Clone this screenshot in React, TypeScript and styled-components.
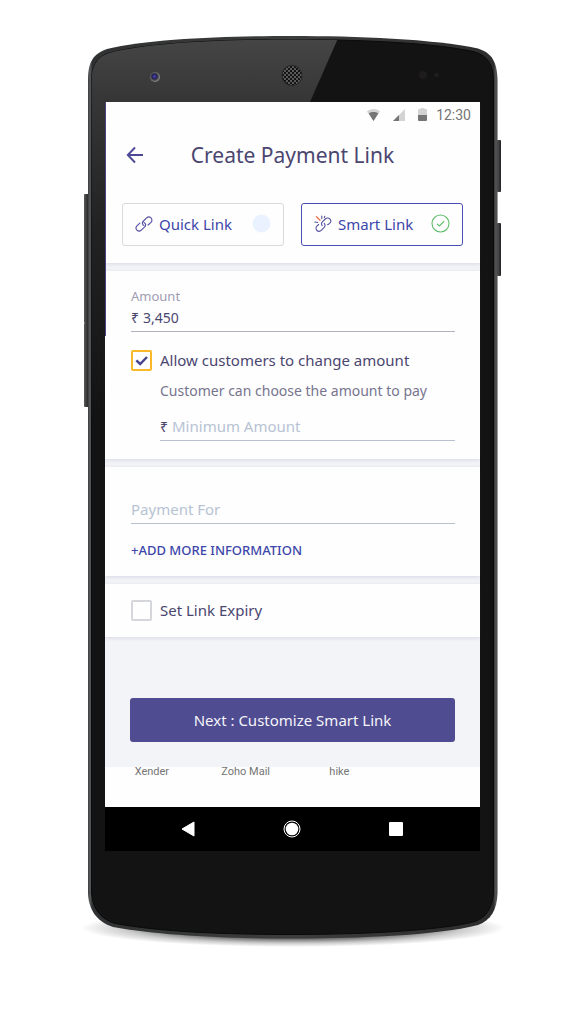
import React, { useState } from 'react';
import styled, { createGlobalStyle } from 'styled-components';

const GlobalStyle = createGlobalStyle`
  * { box-sizing: border-box; }
  body {
    margin: 0;
    background: #fff;
    font-family: 'Noto Sans', 'Open Sans', sans-serif;
  }
  button, input { font-family: inherit; }
`;

const Page = styled.div`
  display: flex;
  justify-content: center;
  padding: 30px 0 70px;
`;

const Phone = styled.div`
  position: relative;
  width: 100%;
  max-width: 417px;
  padding: 72px 21px 103px;
`;

const PhoneBody = styled.svg`
  position: absolute;
  inset: 0;
  width: 100%;
  height: 100%;
  overflow: visible;
`;

const Screen = styled.main`
  position: relative;
  display: flex;
  flex-direction: column;
  background: #f3f4f8;
  color: #4a4670;

  &::before {
    content: '';
    position: absolute;
    z-index: 1;
    top: 0;
    left: 0;
    width: 1px;
    height: 234px;
    background: #4a4580;
  }
`;

const Section = styled.section<{ $top?: number; $bottom?: number }>`
  display: flex;
  flex-direction: column;
  align-items: stretch;
  padding: ${(p) => p.$top ?? 16}px 25px ${(p) => p.$bottom ?? 16}px 26px;
  margin-bottom: 8px;
  background: #fefefe;
  box-shadow: 0 1px 4px rgba(60, 60, 110, 0.15);
`;

const Top = styled.header`
  padding-bottom: 17px;
  margin-bottom: 8px;
  background: #fefefe;
  box-shadow: 0 1px 4px rgba(60, 60, 110, 0.15);
`;

const StatusBar = styled.div`
  display: flex;
  align-items: center;
  justify-content: flex-end;
  height: 25px;
  padding-right: 9px;
  color: #757575;
  font: 14px/24px Roboto, sans-serif;

  svg { margin-right: 13px; }
  time { margin-left: -4px; }
`;

const TitleBar = styled.div`
  display: grid;
  grid-template-columns: 20px 1fr 20px;
  align-items: center;
  height: 56px;
  padding: 0 20px;
`;

const IconButton = styled.button`
  display: flex;
  align-items: center;
  justify-content: center;
  padding: 0;
  border: 0;
  background: none;
  cursor: pointer;
`;

const Title = styled.h1`
  margin: 0;
  font-size: 21px;
  line-height: 30px;
  font-weight: 400;
  text-align: center;
  white-space: nowrap;
`;

const Tabs = styled.div`
  display: grid;
  grid-template-columns: 1fr 1fr;
  gap: 17px;
  padding: 20px 17px 0;
`;

const Tab = styled.button<{ $active: boolean }>`
  display: flex;
  align-items: center;
  height: 43px;
  padding: 0 12px 2px;
  border: 1px solid ${(p) => (p.$active ? '#4750b2' : '#d9d9de')};
  border-radius: 3px;
  background: #fefefe;
  color: #3c46aa;
  font-size: 15px;
  line-height: 20px;
  cursor: pointer;
`;

const TabText = styled.span`
  flex: 1;
  margin-left: 6px;
  text-align: left;
  white-space: nowrap;
`;

const Label = styled.label`
  color: #9e9cb2;
  font-size: 13px;
  line-height: 18px;
`;

const Field = styled.div<{ $tone?: string }>`
  display: flex;
  align-items: center;
  gap: 4px;
  height: 27px;
  border-bottom: 1px solid ${(p) => p.$tone ?? '#b6c0d0'};
  font-size: 14px;
  line-height: 20px;
`;

const Input = styled.input`
  flex: 1;
  min-width: 0;
  padding: 0;
  border: 0;
  outline: 0;
  background: none;
  color: inherit;
  font-size: 14px;
  line-height: 20px;

  &::placeholder { color: #b7c3d3; opacity: 1; font-size: 15px; }
`;

const CheckRow = styled.label`
  display: flex;
  align-items: center;
  gap: 8px;
  font-size: 15px;
  line-height: 21px;
  white-space: nowrap;
  cursor: pointer;
`;

const CheckBox = styled.span`
  position: relative;
  display: flex;

  svg {
    position: absolute;
    inset: 0;
    pointer-events: none;
  }
`;

const CheckInput = styled.input`
  appearance: none;
  width: 21px;
  height: 21px;
  margin: 0;
  border: 2px solid #d5d5dc;
  border-radius: 2px;
  background: #fefefe;

  &:checked { border-color: #fbb829; }
`;

const AmountOptions = styled.div`
  padding-top: 18px;
`;

const Nested = styled.div`
  display: flex;
  flex-direction: column;
  gap: 13px;
  padding: 10px 0 0 29px;
`;

const Hint = styled.p`
  margin: 0;
  color: #77748f;
  font-size: 14px;
  line-height: 20px;
  white-space: nowrap;
`;

const AddLink = styled.a`
  align-self: flex-start;
  margin-top: 16px;
  color: #3c46aa;
  font-size: 13px;
  line-height: 20px;
  font-weight: 500;
  text-decoration: none;
`;

const Actions = styled.div`
  display: flex;
  padding: 53px 25px 25px;
`;

const NextButton = styled.button`
  flex: 1;
  height: 44px;
  border: 0;
  border-radius: 3px;
  background: #504c91;
  color: #f4f4fa;
  font-size: 15px;
  line-height: 20px;
  cursor: pointer;
`;

const ShareRow = styled.ul`
  display: grid;
  grid-template-columns: repeat(4, 1fr);
  height: 40px;
  margin: 0;
  padding: 0;
  background: #fefefe;
  color: #757575;
  font: 11px/10px Roboto, sans-serif;
  list-style: none;
  text-align: center;
`;

const NavBar = styled.nav`
  display: grid;
  grid-template-columns: repeat(3, 104px);
  justify-content: center;
  height: 44px;
  padding-right: 2px;
  background: #000;
`;

const RIM =
  'M88 200 V80 C88 62 93 54 107 49 C150 38.500 230 36 292.500 36 C355 36 435 39 478 48.500 C492 53 497 62 497.500 80 V893 C497 910 491 920 478 925 C440 935 360 938.500 292.500 938.500 C225 938.500 160 935.500 113 927 C95 921 88.500 908 88 893 Z';
const FACE =
  'M91.500 200 V82 C91.500 65 97 57 109 53 C152 42 230 39.500 292.500 39.500 C355 39.500 434 42.500 475 52 C488 56 493.500 65 493.500 82 V891 C493 907 487 917 475 921.500 C438 931 360 934.500 292.500 934.500 C225 934.500 162 932 115 923.500 C98 918 92 906 91.500 891 Z';

function PhoneFrame() {
  return (
    <PhoneBody viewBox="84 30 417 924" preserveAspectRatio="none" aria-hidden="true">
      <defs>
        <linearGradient id="rim" x1="0" y1="0" x2="1" y2="0">
          <stop offset="0" stopColor="#3a3b3c" />
          <stop offset="0.005" stopColor="#5c5d5e" />
          <stop offset="0.010" stopColor="#303132" />
          <stop offset="0.500" stopColor="#3c3d3d" />
          <stop offset="0.991" stopColor="#2c2c2d" />
          <stop offset="0.996" stopColor="#5a5a5c" />
          <stop offset="1" stopColor="#3d3d3f" />
        </linearGradient>
        <linearGradient id="glare" x1="0" y1="0" x2="0" y2="1">
          <stop offset="0" stopColor="#464646" />
          <stop offset="0.170" stopColor="#363636" />
          <stop offset="0.500" stopColor="#222" />
          <stop offset="1" stopColor="#131313" />
        </linearGradient>
        <linearGradient id="key" x1="0" y1="0" x2="1" y2="0">
          <stop offset="0" stopColor="#58595a" />
          <stop offset="1" stopColor="#1f1f20" />
        </linearGradient>
        <radialGradient id="lens" cx="0.450" cy="0.450" r="0.550">
          <stop offset="0" stopColor="#4b45c0" />
          <stop offset="0.450" stopColor="#23214d" />
          <stop offset="0.700" stopColor="#555" />
          <stop offset="1" stopColor="#8a8a8a" />
        </radialGradient>
        <radialGradient id="shade">
          <stop offset="0" stopColor="#000" stopOpacity="0.900" />
          <stop offset="0.550" stopColor="#000" stopOpacity="0.600" />
          <stop offset="0.800" stopColor="#000" stopOpacity="0.200" />
          <stop offset="1" stopColor="#000" stopOpacity="0" />
        </radialGradient>
        <pattern id="mesh" width="4" height="4" patternUnits="userSpaceOnUse">
          <circle cx="1" cy="1" r="1.100" fill="#0a0a0a" />
          <circle cx="3" cy="3" r="1.100" fill="#0a0a0a" />
        </pattern>
        <clipPath id="face"><path d={FACE} /></clipPath>
      </defs>
      <ellipse cx="293" cy="928" rx="212" ry="19" fill="url(#shade)" />
      <rect x="84" y="194" width="5" height="129" rx="1" fill="url(#key)" />
      <rect x="84" y="323" width="5" height="84" rx="1" fill="url(#key)" />
      <rect x="497" y="140" width="4" height="52" rx="1" fill="url(#key)" />
      <rect x="497" y="223" width="4" height="53" rx="1" fill="url(#key)" />
      <path d={RIM} fill="url(#rim)" />
      <path d={FACE} fill="#131313" stroke="#0b0b0b" />
      <path d="M84 36 H339 L310 102 L170 420 H84 Z" fill="url(#glare)" clipPath="url(#face)" />
      <circle cx="155" cy="77" r="5" fill="url(#lens)" />
      <circle cx="292" cy="75.500" r="10" fill="#5a5a5a" />
      <circle cx="292" cy="75.500" r="10" fill="url(#mesh)" stroke="#242424" />
      <circle cx="423" cy="75" r="4" fill="#1e1c1c" />
      <circle cx="436.500" cy="75" r="2.500" fill="#1e1c1c" />
    </PhoneBody>
  );
}

function StatusIcons() {
  return (
    <>
      <svg width="13" height="12" viewBox="0 0 13 12" aria-hidden="true">
        <path d="M0 2.500 C4 -0.700 9 -0.700 13 2.500 L6.500 12 Z" fill="#d3d3d3" />
        <path d="M1.700 4.500 C4.500 2.600 8.500 2.600 11.300 4.500 L6.500 12 Z" fill="#757575" />
      </svg>
      <svg width="12" height="12" viewBox="0 0 12 12" aria-hidden="true">
        <path d="M12 0 V12 H0 Z" fill="#d3d3d3" />
        <path d="M6 6 V12 H0 Z" fill="#757575" />
      </svg>
      <svg width="9" height="13" viewBox="0 0 9 13" aria-hidden="true">
        <path d="M2.500 0 H6.500 V1 H8 Q9 1 9 2 V7 H0 V2 Q0 1 1 1 H2.500 Z" fill="#d3d3d3" />
        <path d="M0 7 H9 V12 Q9 13 8 13 H1 Q0 13 0 12 Z" fill="#757575" />
      </svg>
    </>
  );
}

function LinkIcon() {
  return (
    <svg width="18" height="16" viewBox="0 0 17.300 15.500" aria-hidden="true">
      <g fill="none" stroke="#5551a0" strokeWidth="1.100" strokeLinecap="round">
        <path d="M8.600 9.300 C7 8.500 6.600 6.400 7.900 5.100 L11.200 1.900 C12.500 0.700 14.300 0.800 15.400 1.900 C16.600 3.100 16.600 4.900 15.400 6.100 L12.600 8.700" />
        <path d="M8.600 6.200 C10.500 7 10.700 9.200 9.400 10.500 L6 13.700 C4.700 14.900 3 14.800 1.800 13.700 C0.700 12.500 0.700 10.700 1.800 9.500 L4.600 6.900" />
      </g>
    </svg>
  );
}

function BrokenLinkIcon() {
  return (
    <svg width="18" height="18" viewBox="0 0 18 18" aria-hidden="true">
      <g fill="none" stroke="#5551a0" strokeWidth="1.100" strokeLinecap="round">
        <path d="M8.200 10.600 C7.200 9.300 7.400 7.900 8.400 6.900 L11.300 4 C12.700 2.600 14.600 2.700 15.800 3.900 C17 5.100 17 7 15.800 8.200 C15 9 14.200 9.600 13.400 9.700" />
        <path d="M10.300 8.500 C11.300 9.500 11.300 11.300 10.200 12.400 L7.300 15.400 C6 16.700 4.100 16.700 2.900 15.500 C1.700 14.300 1.700 12.400 2.900 11.200 L4.600 9.500" />
        <path d="M7.800 1 V3.600 M0.800 7 L3.800 7.500 M10.800 1.200 L10.300 2.600" />
      </g>
      <path d="M2.500 1.700 L6 5.200" stroke="#f0754e" strokeWidth="1.400" strokeLinecap="round" />
    </svg>
  );
}

function SelectionMark({ active }: { active: boolean }) {
  return (
    <svg width="19" height="19" viewBox="0 0 19 19" aria-hidden="true">
      {active ? (
        <g fill="none" stroke="#5fbd6b">
          <circle cx="9.500" cy="9.500" r="8.500" strokeWidth="1.100" />
          <path d="M6 9.900 L8.400 12 L13.200 7.200" strokeWidth="1.200" />
        </g>
      ) : (
        <circle cx="9.500" cy="9.500" r="9" fill="#eaf1ff" />
      )}
    </svg>
  );
}

interface CheckProps {
  text: string;
  checked: boolean;
  onChange: (next: boolean) => void;
}

function Check({ text, checked, onChange }: CheckProps) {
  return (
    <CheckRow>
      <CheckBox>
        <CheckInput type="checkbox" checked={checked} onChange={(e) => onChange(e.target.checked)} />
        {checked && (
          <svg width="21" height="21" viewBox="0 0 21 21" aria-hidden="true">
            <path d="M5.300 10.300 L9.200 14 L16 7" fill="none" stroke="#4a4590" strokeWidth="2.500" />
          </svg>
        )}
      </CheckBox>
      {text}
    </CheckRow>
  );
}

export default function App() {
  const [mode, setMode] = useState<'quick' | 'smart'>('smart');
  const [amount, setAmount] = useState('3,450');
  const [flexible, setFlexible] = useState(true);
  const [expiry, setExpiry] = useState(false);

  return (
    <>
      <GlobalStyle />
      <Page>
        <Phone>
          <PhoneFrame />
          <Screen>
            <Top>
              <StatusBar>
                <StatusIcons />
                <time>12:30</time>
              </StatusBar>
              <TitleBar>
                <IconButton type="button" aria-label="Back">
                  <svg width="18" height="18" viewBox="0 0 18 18" aria-hidden="true">
                    <path d="M17 9 H2 M9 1.500 L1.800 9 L9 16.500" fill="none" stroke="#4d4893" strokeWidth="1.900" />
                  </svg>
                </IconButton>
                <Title>Create Payment Link</Title>
              </TitleBar>
              <Tabs>
                <Tab type="button" $active={mode === 'quick'} aria-pressed={mode === 'quick'} onClick={() => setMode('quick')}>
                  <LinkIcon />
                  <TabText>Quick Link</TabText>
                  <SelectionMark active={mode === 'quick'} />
                </Tab>
                <Tab type="button" $active={mode === 'smart'} aria-pressed={mode === 'smart'} onClick={() => setMode('smart')}>
                  <BrokenLinkIcon />
                  <TabText>Smart Link</TabText>
                  <SelectionMark active={mode === 'smart'} />
                </Tab>
              </Tabs>
            </Top>

            <Section $bottom={18}>
              <Label htmlFor="amount">Amount</Label>
              <Field $tone="#b3b1c0">
                <span>₹</span>
                <Input id="amount" value={amount} onChange={(e) => setAmount(e.target.value)} />
              </Field>
              <AmountOptions>
                <Check text="Allow customers to change amount" checked={flexible} onChange={setFlexible} />
                <Nested>
                  <Hint>Customer can choose the amount to pay</Hint>
                  <Field>
                    <span>₹</span>
                    <Input aria-label="Minimum Amount" placeholder="Minimum Amount" />
                  </Field>
                </Nested>
              </AmountOptions>
            </Section>

            <Section $top={30}>
              <Field>
                <Input aria-label="Payment For" placeholder="Payment For" />
              </Field>
              <AddLink href="#more">+ADD MORE INFORMATION</AddLink>
            </Section>

            <Section>
              <Check text="Set Link Expiry" checked={expiry} onChange={setExpiry} />
            </Section>

            <Actions>
              <NextButton type="button">Next : Customize Smart Link</NextButton>
            </Actions>

            <ShareRow>
              <li>Xender</li>
              <li>Zoho Mail</li>
              <li>hike</li>
            </ShareRow>

            <NavBar>
              <IconButton type="button" aria-label="Go back">
                <svg width="14" height="16" viewBox="0 0 14 16" aria-hidden="true">
                  <path d="M13 1 V15 L1 8 Z" fill="#fff" stroke="#fff" strokeLinejoin="round" />
                </svg>
              </IconButton>
              <IconButton type="button" aria-label="Home">
                <svg width="18" height="18" viewBox="0 0 18 18" aria-hidden="true">
                  <circle cx="9" cy="9" r="6.300" fill="#fff" />
                  <circle cx="9" cy="9" r="8" fill="none" stroke="#fff" />
                </svg>
              </IconButton>
              <IconButton type="button" aria-label="Recent apps">
                <svg width="14" height="14" viewBox="0 0 14 14" aria-hidden="true">
                  <rect width="14" height="14" rx="1" fill="#fff" />
                </svg>
              </IconButton>
            </NavBar>
          </Screen>
        </Phone>
      </Page>
    </>
  );
}
